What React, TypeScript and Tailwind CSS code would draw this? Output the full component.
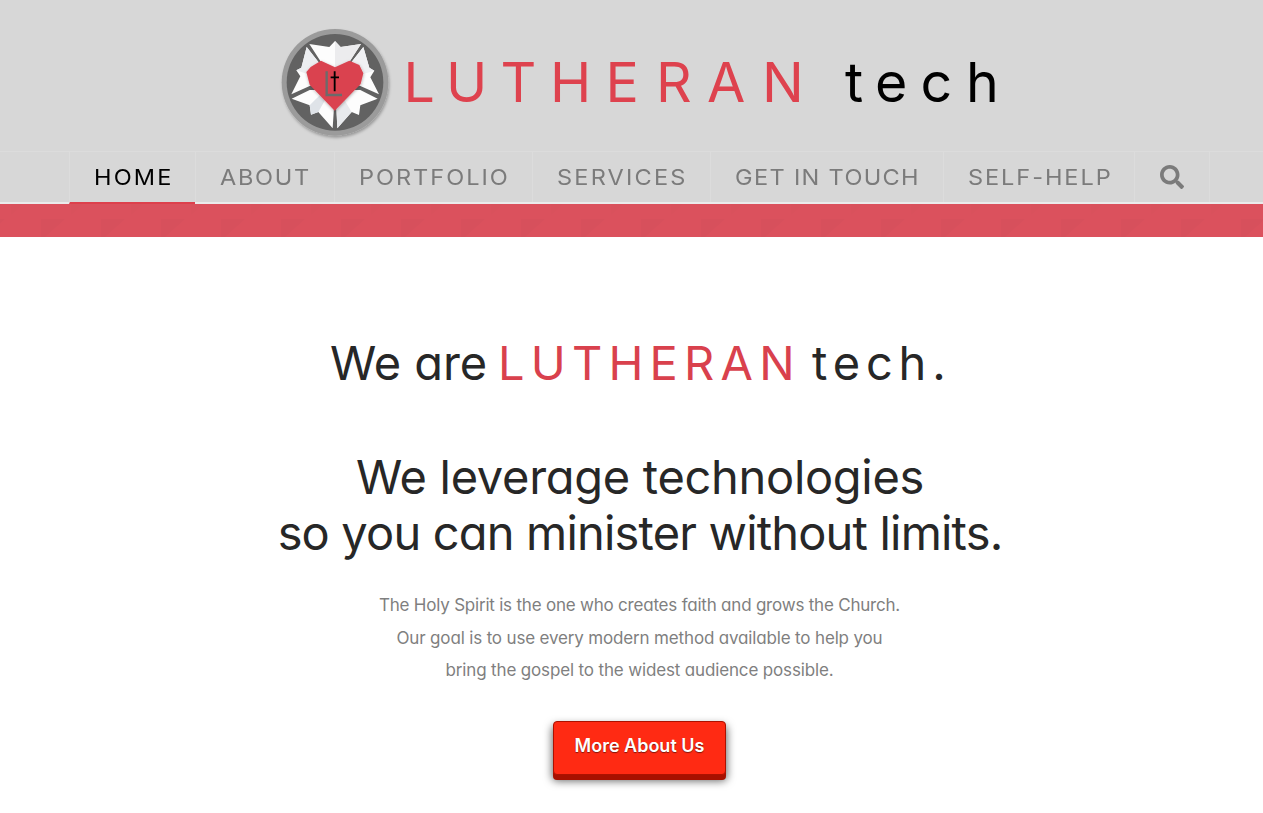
import { FaSearch } from 'react-icons/fa';

const navItems = [
  { label: 'HOME', cell: 'w-[126px] text-black', spacing: 'tracking-[2px]', active: true },
  { label: 'ABOUT', cell: 'w-[139px] text-[#7b7b7b]', spacing: 'tracking-[1.6px]' },
  { label: 'PORTFOLIO', cell: 'w-[198px] text-[#7b7b7b]', spacing: 'tracking-[1.85px]' },
  { label: 'SERVICES', cell: 'w-[178px] text-[#7b7b7b]', spacing: 'tracking-[2.05px]' },
  { label: 'GET IN TOUCH', cell: 'w-[233px] text-[#7b7b7b]', spacing: 'tracking-[1.25px]' },
  { label: 'SELF-HELP', cell: 'w-[191px] text-[#7b7b7b]', spacing: 'tracking-[1.8px]' },
];

function Badge() {
  return (
    <svg viewBox="0 0 390 375" className="h-[125px] w-[130px] shrink-0" aria-hidden="true">
      <defs>
        <filter id="soft" x="-20%" y="-20%" width="150%" height="150%">
          <feDropShadow dx="3" dy="6" stdDeviation="5" floodOpacity="0.3" />
        </filter>
        <filter id="heartShadow" x="-20%" y="-20%" width="140%" height="140%">
          <feDropShadow dx="1" dy="3" stdDeviation="4" floodOpacity="0.3" />
        </filter>
      </defs>
      <circle cx="195" cy="187" r="160" fill="#9b9b9b" filter="url(#soft)" />
      <circle cx="195" cy="187" r="145" fill="#626262" />
      <g fill="#fdfdfd">
        <path d="M118 72L178 81L195 63L212 81L273 72L238 126L195 155L153 126Z" />
        <path d="M280 81L298 143L313 152L301 172L327 223L266 196L230 160L243 128Z" />
        <path d="M110 81L94 143L79 151L91 169L64 223L124 196L160 160L147 128Z" />
        <path d="M65 236L119 210L180 210L192 262L188 325L145 276L123 284L119 256Z" />
        <path d="M323 236L271 210L210 210L199 262L202 325L245 276L267 285L271 256Z" />
      </g>
      <path d="M195 63L212 81L273 72L238 126L195 155Z" fill="#ececee" />
      <path d="M280 81L298 143L313 152L270 165L243 128Z" fill="#f0f1f4" />
      <path d="M110 81L94 143L79 151L120 165L147 128Z" fill="#eceef1" />
      <path d="M119 256L123 284L145 276L170 232L150 225Z" fill="#dfe3e8" />
      <path d="M199 262L202 325L245 276L222 238Z" fill="#e8eaed" />
      <path
        d="M153 122L195 142L238 122L268 135L280 160L272 192L194 272L119 194L109 156L122 141Z"
        fill="#da4350"
        filter="url(#heartShadow)"
      />
      <path d="M170 154V225H216" fill="none" stroke="#6b6b6b" strokeWidth="7" />
      <path d="M194 154V214M182 172H207" fill="none" stroke="#000" strokeWidth="5.5" />
    </svg>
  );
}

function Logo() {
  return (
    <div className="flex h-[151px] items-start pt-[20px] pl-[270px]">
      <Badge />
      <svg viewBox="400 20 610 125" className="h-[125px] w-[610px] shrink-0 font-['Inter',sans-serif] text-[55.5px]" fontWeight="400">
        <text y="102.2" x="403.5 446 500.5 550 605.5 656 707 762" fill="#de424e">LUTHERAN</text>
        <text y="102.2" x="845 875 920.5 966" fill="#000">tech</text>
      </svg>
    </div>
  );
}

function Stripe() {
  return (
    <svg className="block h-[33px] w-full" aria-hidden="true">
      <defs>
        <pattern id="facets" width="60" height="33" patternUnits="userSpaceOnUse" x="11">
          <rect width="60" height="33" fill="#db515d" />
          <path d="M0 0H12L0 11Z" fill="#d9515c" />
          <path d="M30 15H54L34 33H30Z" fill="#d7505c" />
        </pattern>
      </defs>
      <rect width="100%" height="33" fill="url(#facets)" />
    </svg>
  );
}

export default function App() {
  return (
    <div className="h-[813px] w-full overflow-hidden bg-white font-['Inter',sans-serif]">
      <header className="bg-[#d7d7d7]">
        <Logo />
        <nav className="flex h-[53px] border-t border-b-2 border-t-[#dcdcdc] border-b-[#ebebeb] pl-[69px]">
          {navItems.map((item) => (
            <a
              key={item.label}
              className={`${item.cell} ${item.spacing} shrink-0 border-l border-[#dcdcdc] pl-[24px] text-[22px] leading-[50px] font-normal whitespace-nowrap ${
                item.active ? 'h-[52px] border-b-2 border-b-[#dd404c]' : 'h-[50px]'
              }`}
            >
              <span className="inline-block origin-left scale-x-[1.07]">{item.label}</span>
            </a>
          ))}
          <a className="flex h-[50px] w-[76px] shrink-0 items-center border-x border-[#dcdcdc] pl-[25px] text-[#7b7b7b]">
            <FaSearch className="size-[24px]" />
          </a>
        </nav>
      </header>
      <Stripe />

      <main className="text-center [font-feature-settings:'cv11']">
        <h1 className="flex pt-[98px] pl-[330px] text-[47px] leading-[56px] font-[370] whitespace-nowrap text-[#272727]">
          <span className="w-[168px] text-left tracking-[-0.1px]">We are</span>
          <span className="w-[314px] text-left tracking-[6.2px] text-[#d9414d]">LUTHERAN</span>
          <span className="text-left tracking-[5.8px]">tech.</span>
        </h1>
        <h2 className="pt-[58px] pl-[17px] text-[47px] leading-[56px] font-[370] whitespace-nowrap text-[#272727]">
          <span className="block tracking-[-0.3px]">We leverage technologies</span>
          <span className="block tracking-[-0.82px]">so you can minister without limits.</span>
        </h2>
        <p className="pt-[28px] pl-[16px] text-[17px] leading-[32.5px] font-[370] whitespace-nowrap text-[#7f7f7f]">
          <span className="block tracking-[-0.21px]">The Holy Spirit is the one who creates faith and grows the Church.</span>
          <span className="block tracking-[-0.16px]">Our goal is to use every modern method available to help you</span>
          <span className="block tracking-[-0.15px]">bring the gospel to the widest audience possible.</span>
        </p>
        <div className="flex justify-center pt-[34px] pl-[16px]">
          <button className="h-[54px] w-[173px] rounded-[4px] border border-[#ac1100] bg-[#ff2a13] pb-[4px] text-[18px] leading-[48px] font-semibold text-white [box-shadow:0_5px_0_0_#a71000,0_5px_9px_1px_rgba(0,0,0,0.6)] [text-shadow:0_1px_1px_rgba(0,0,0,0.5)]">
            More About Us
          </button>
        </div>
      </main>
    </div>
  );
}
